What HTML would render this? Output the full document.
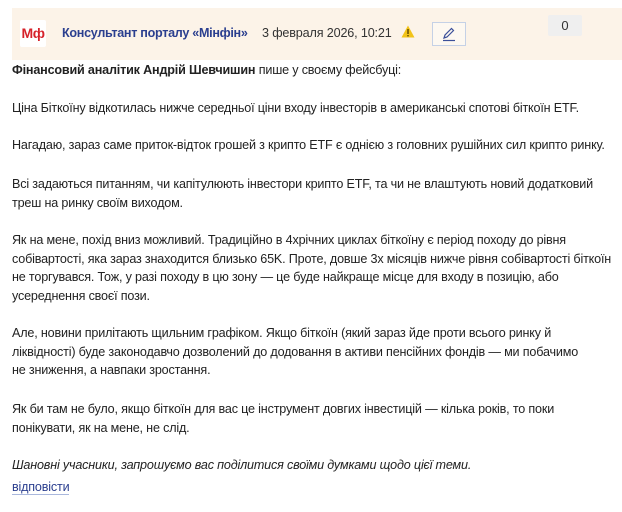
<!DOCTYPE html>
<html><head><meta charset="utf-8"><style>
body{margin:0;background:#fff;font-family:"Liberation Sans",sans-serif;color:#222;width:622px;height:512px;overflow:hidden;position:relative}
.band{position:absolute;left:12px;top:8px;width:610px;height:52px;background:#fcf3e8}
.logo{position:absolute;left:20px;top:20px;width:26px;height:27px;background:#fff;border-radius:2px;color:#d6222a;font-weight:bold;font-size:14px;line-height:27px;text-align:center;letter-spacing:-0.5px}
.name{position:absolute;left:62px;top:26px;font-size:12.6px;font-weight:bold;color:#2b3f8f;white-space:nowrap;letter-spacing:-0.3px}
.date{position:absolute;left:262px;top:26px;font-size:12.6px;color:#333;white-space:nowrap;letter-spacing:-0.15px}
.warn{position:absolute;left:401px;top:25px}
.edit{position:absolute;left:432px;top:22px;width:32px;height:22px;border:1px solid #c5d1e6;background:#fdf8f1}
.cnt{position:absolute;left:548px;top:15px;width:34px;height:21px;background:#efefef;border-radius:2px;font-size:13px;text-align:center;line-height:21px;color:#333}
.t{position:absolute;left:12px;width:620px;font-size:12.6px;letter-spacing:-0.18px;line-height:18.5px;margin:0;white-space:nowrap}
a{color:#2b3f8f;text-decoration:none;border-bottom:1px solid #aab8dd}
</style></head><body>
<div class="band"></div>
<div class="logo">Мф</div>
<div class="name">Консультант порталу «Мінфін»</div>
<div class="date">3 февраля 2026, 10:21</div>
<svg class="warn" width="14" height="13" viewBox="0 0 14 13"><path d="M7 0.5L13.5 12.5H0.5Z" fill="#f2c318"/><rect x="6.3" y="4" width="1.4" height="5" fill="#5a4500"/><rect x="6.3" y="10" width="1.4" height="1.4" fill="#5a4500"/></svg>
<div class="edit"><svg width="32" height="22" viewBox="0 0 32 22"><path d="M11 15l1-3 6.5-6.5 2 2L14 14z" fill="none" stroke="#3b4f99" stroke-width="1.2"/><path d="M10 17.5h12" stroke="#3b4f99" stroke-width="1.2"/></svg></div>
<div class="cnt">0</div>
<p class="t" style="top:61px"><b>Фінансовий аналітик Андрій Шевчишин</b> пише у своєму фейсбуці:</p>
<p class="t" style="top:99px">Ціна Біткоїну відкотилась нижче середньої ціни входу інвесторів в американські спотові біткоїн ETF.</p>
<p class="t" style="top:136px">Нагадаю, зараз саме приток-відток грошей з крипто ETF є однією з головних рушійних сил крипто ринку.</p>
<p class="t" style="top:175px">Всі задаються питанням, чи капітулюють інвестори крипто ETF, та чи не влаштують новий додатковий<br>треш на ринку своїм виходом.</p>
<p class="t" style="top:231px">Як на мене, похід вниз можливий. Традиційно в 4хрічних циклах біткоїну є період походу до рівня<br>собівартості, яка зараз знаходится близько 65K. Проте, довше 3х місяців нижче рівня собівартості біткоїн<br>не торгувався. Тож, у разі походу в цю зону — це буде найкраще місце для входу в позицію, або<br>усереднення своєї пози.</p>
<p class="t" style="top:324px">Але, новини прилітають щильним графіком. Якщо біткоїн (який зараз йде проти всього ринку й<br>ліквідності) буде законодавчо дозволений до додовання в активи пенсійних фондів — ми побачимо<br>не зниження, а навпаки зростання.</p>
<p class="t" style="top:400px">Як би там не було, якщо біткоїн для вас це інструмент довгих інвестицій — кілька років, то поки<br>понікувати, як на мене, не слід.</p>
<p class="t" style="top:456px"><i>Шановні учасники, запрошуємо вас поділитися своїми думками щодо цієї теми.</i></p>
<p class="t" style="top:478px"><a>відповісти</a></p>
</body></html>
